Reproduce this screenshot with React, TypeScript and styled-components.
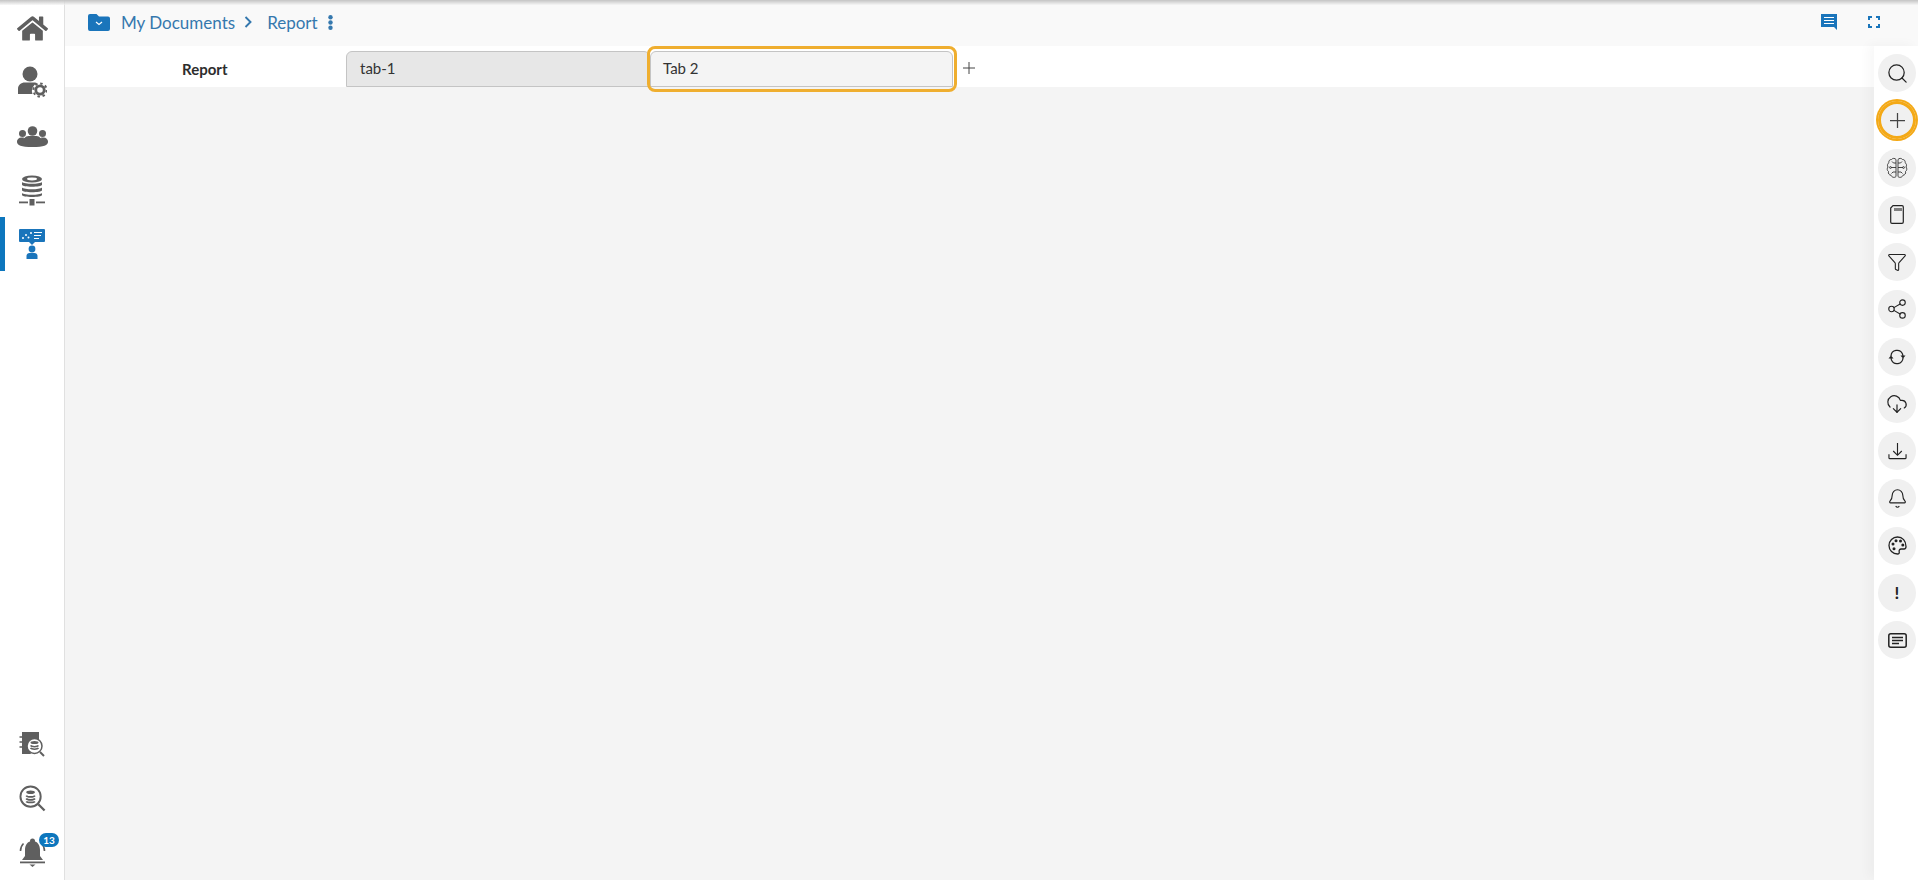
import { ReactNode } from "react";
import styled, { createGlobalStyle } from "styled-components";
import { FaHome } from "react-icons/fa";
import { Search, Filter, Share2, CloudDownload, Bell } from "lucide-react";

const GlobalStyle = createGlobalStyle`
  html, body {
    margin: 0;
    height: 100%;
    background: #f4f4f4;
    font-family: "Lato", "Open Sans", sans-serif;
    overflow: hidden;
  }
  #root {
    height: 100%;
  }
`;

const Page = styled.div`
  display: flex;
  height: 880px;
  position: relative;

  &:before {
    content: "";
    position: absolute;
    z-index: 5;
    top: 0;
    left: 0;
    right: 0;
    height: 5px;
    background: linear-gradient(#c4c4c4, rgba(244, 244, 244, 0.6));
  }
`;

const Sidebar = styled.nav`
  box-sizing: border-box;
  width: 65px;
  flex: none;
  background: #fff;
  border-right: 1px solid #e0e0e0;
  display: flex;
  flex-direction: column;
  justify-content: space-between;
  padding: 1px 0 1px;
`;

const SideGroup = styled.div`
  display: flex;
  flex-direction: column;
`;

const SideItem = styled.div<{ $active?: boolean }>`
  height: 54px;
  display: flex;
  align-items: center;
  justify-content: center;
  color: #5f5f5f;
  position: relative;
  box-sizing: border-box;
  border-left: 5px solid ${({ $active }) => ($active ? "#0d76bd" : "transparent")};
  padding-right: 5px;
`;

const Badge = styled.span`
  position: absolute;
  top: 8px;
  left: 34px;
  width: 20px;
  height: 14px;
  border-radius: 8px;
  background: #0d76bd;
  color: #fff;
  font-size: 10px;
  font-weight: 700;
  line-height: 14px;
  text-align: center;
`;

const Main = styled.div`
  flex: 1;
  min-width: 0;
  display: flex;
  flex-direction: column;
`;

const TopBar = styled.header`
  height: 46px;
  flex: none;
  box-sizing: border-box;
  background: #f9f9f9;
  display: flex;
  align-items: center;
  justify-content: space-between;
  padding: 0 38px 2px 23px;
`;

const Crumbs = styled.div`
  display: flex;
  align-items: center;
  color: #3578ae;
  font-size: 17px;
`;

const CrumbText = styled.span<{ $ml: number }>`
  margin-left: ${({ $ml }) => $ml}px;
`;

const TopActions = styled.div`
  display: flex;
  align-items: center;
  gap: 31px;
  color: #1a75bb;
`;

const Body = styled.div`
  flex: 1;
  display: flex;
  min-height: 0;
`;

const Content = styled.main`
  flex: 1;
  min-width: 0;
  background: #f4f4f4;
`;

const TabRow = styled.div`
  height: 41px;
  background: #fff;
  display: flex;
  align-items: flex-start;
  box-sizing: border-box;
  padding-top: 5px;
`;

const ReportLabel = styled.div`
  width: 281px;
  flex: none;
  box-sizing: border-box;
  padding: 9px 0 0 117px;
  font-size: 15px;
  font-weight: 700;
  color: #2d2d2d;
`;

const Tab = styled.div<{ $selected?: boolean }>`
  box-sizing: border-box;
  width: ${({ $selected }) => ($selected ? 303 : 304)}px;
  height: 36px;
  border: 1px solid #c4c4c4;
  border-radius: 6px 6px 0 0;
  background: ${({ $selected }) => ($selected ? "#f4f4f4" : "#e7e7e7")};
  padding: 0 10px 0 ${({ $selected }) => ($selected ? 12 : 13)}px;
  font-size: 15px;
  line-height: 32px;
  color: #333;
  position: relative;
  flex: none;
`;

const TabHighlight = styled.span`
  position: absolute;
  top: -6px;
  bottom: -6px;
  left: -4px;
  right: -5px;
  border: 3px solid #efae2f;
  border-radius: 8px;
  pointer-events: none;
`;

const AddTab = styled.div`
  margin: 11px 0 0 10px;
  display: flex;
`;

const Rail = styled.aside`
  width: 44px;
  flex: none;
  background: #fff;
  box-shadow: -6px -2px 10px rgba(0, 0, 0, 0.03);
  display: flex;
  flex-direction: column;
  align-items: center;
  padding-top: 8px;
  box-sizing: border-box;
  gap: 9.25px;
`;

const RailButton = styled.div<{ $ring?: boolean }>`
  width: 38px;
  height: 38px;
  flex: none;
  border-radius: 50%;
  background: #f0f0f0;
  display: flex;
  align-items: center;
  justify-content: center;
  color: #222;
  font-size: 17px;
  font-weight: 700;
  position: relative;
  left: 1px;
  ${({ $ring }) =>
    $ring && `box-shadow: 0 0 0 2px #f4a916, inset 0 0 0 3px #f4a916;`}
`;

const UserGearIcon = () => (
  <svg width="30" height="32" viewBox="0 0 30 32" fill="#5f5f5f">
    <circle cx="13" cy="8" r="7.500" />
    <path d="M1 28v-5c0-4 3-6.500 7-6.500h9c1.500 0 2.500.3 3.500.8A8 8 0 0 0 15.500 28z" />
    <circle cx="23" cy="24" r="4.200" fill="none" stroke="#5f5f5f" strokeWidth="2.800" />
    <circle cx="23" cy="24" r="6.600" fill="none" stroke="#5f5f5f" strokeWidth="2" strokeDasharray="2.500 2.680" />
  </svg>
);

const UsersIcon = () => (
  <svg width="31" height="21" viewBox="0 0 31 21" fill="#5f5f5f">
    <circle cx="15.500" cy="5" r="4.800" />
    <circle cx="5.500" cy="7.500" r="3.500" />
    <circle cx="25.500" cy="7.500" r="3.500" />
    <path d="M0 16c0-3 2-4.500 4.500-4.500H7c-.5 1-.8 2-.8 3.500zM31 16c0-3-2-4.500-4.500-4.500H24c.5 1 .8 2 .8 3.500z" />
    <path d="M7.500 12c1-1.200 2.500-2 4-2h8c1.500 0 3 .8 4 2 3 .8 7.500 1.500 7.500 4 0 3-4 5-15.500 5S0 19 0 16c0-2.500 4.500-3.200 7.500-4z" />
  </svg>
);

const DbStack = () => (
  <svg width="26" height="31" viewBox="0 0 26 31" fill="#5f5f5f">
    <ellipse cx="13" cy="4" rx="10" ry="3.600" />
    <ellipse cx="13" cy="4" rx="5" ry="1.400" fill="#fff" />
    <path d="M3 7c2 2.400 18 2.400 20 0v2.800c0 2.600-20 2.600-20 0zM3 12.500c2 2.400 18 2.400 20 0v2.800c0 2.600-20 2.600-20 0zM3 18c2 2.400 18 2.400 20 0v2c0 2.600-20 2.600-20 0z" />
    <rect x="10.500" y="24" width="5" height="6.500" />
    <rect x="0" y="26.500" width="9" height="1.800" />
    <rect x="17" y="26.500" width="9" height="1.800" />
  </svg>
);

const PresenterIcon = () => (
  <svg width="26" height="30" viewBox="0 0 26 30">
    <rect x="0" y="0" width="26" height="13" rx="1" fill="#1a75bb" />
    <path d="M10 13h6l-3 3z" fill="#1a75bb" />
    <g fill="#fff">
      <circle cx="4" cy="9" r="1" />
      <circle cx="7" cy="6" r="1" />
      <circle cx="9.500" cy="8.500" r="1" />
      <circle cx="12" cy="4" r="1" />
    </g>
    <path d="M15 3.500h8M15 6.500h7M15 9.500h5" stroke="#fff" strokeWidth="1.200" />
    <circle cx="13" cy="20" r="3.400" fill="#1a75bb" />
    <path d="M7.500 30v-3c0-2 1.500-3 3-3h5c1.500 0 3 1 3 3v3z" fill="#1a75bb" />
  </svg>
);

const BookSearchIcon = () => (
  <svg width="26" height="27" viewBox="0 0 26 27" fill="none">
    <path d="M3 1h17v9a9 9 0 0 0-8 13H3z" fill="#5f5f5f" />
    <path d="M0.500 6h4M0.500 11h4M0.500 16h4" stroke="#5f5f5f" strokeWidth="1.500" />
    <circle cx="15.500" cy="15" r="7.500" fill="#fff" stroke="#5f5f5f" strokeWidth="1.500" />
    <ellipse cx="15.500" cy="11.500" rx="4" ry="1.500" fill="#5f5f5f" />
    <path d="M11.500 14.500c1 1.500 7 1.500 8 0M11.500 17c1 1.500 7 1.500 8 0" stroke="#5f5f5f" strokeWidth="1.500" />
    <path d="M21 21l4 4" stroke="#5f5f5f" strokeWidth="2" />
  </svg>
);

const DbSearchIcon = () => (
  <svg width="27" height="27" viewBox="0 0 28 28" fill="none">
    <circle cx="12" cy="12" r="10.500" stroke="#5f5f5f" strokeWidth="2" />
    <ellipse cx="12" cy="7.500" rx="4.500" ry="1.800" fill="#5f5f5f" />
    <path d="M7.500 11c1 1.800 8 1.800 9 0M7.500 14c1 1.800 8 1.800 9 0M7.500 17c1 1.400 8 1.400 9 0" stroke="#5f5f5f" strokeWidth="1.800" />
    <path d="M20 20l6.500 6.500" stroke="#5f5f5f" strokeWidth="2.400" />
  </svg>
);

const RingingBell = () => (
  <svg width="27" height="29" viewBox="0 0 27 29" fill="#5f5f5f">
    <circle cx="13.500" cy="3" r="2.500" />
    <path d="M13.500 3c5 0 7.500 4 7.500 9v6l3 4H3l3-4v-6c0-5 2.500-9 7.500-9z" />
    <path d="M1 23.500h25v1.800H1z" />
    <path d="M10.500 26.500h6l-3 2.500z" />
    <path d="M1.500 13c0-3 1-5.500 3-7.500M25.500 13c0-3-1-5.500-3-7.500" fill="none" stroke="#5f5f5f" strokeWidth="1.600" />
  </svg>
);

const FolderIcon = () => (
  <svg width="22" height="17" viewBox="0 0 22 17">
    <path d="M0 2a2 2 0 0 1 2-2h6.500L11 2.500h9a2 2 0 0 1 2 2V15a2 2 0 0 1-2 2H2a2 2 0 0 1-2-2z" fill="#1a75bb" />
    <path d="M8 8l3 2.500L14 8" stroke="#fff" strokeWidth="1.200" fill="none" />
  </svg>
);

const Chevron = () => (
  <svg width="8" height="12" viewBox="0 0 8 12" style={{ marginLeft: 9 }}>
    <path d="M1.500 1l5 5-5 5" stroke="#3578ae" strokeWidth="1.900" fill="none" />
  </svg>
);

const Kebab = () => (
  <svg width="5" height="15" viewBox="0 0 5 15" style={{ marginLeft: 10 }} fill="#3578ae">
    <circle cx="2.500" cy="2.200" r="2.200" />
    <circle cx="2.500" cy="7.500" r="2.200" />
    <circle cx="2.500" cy="12.800" r="2.200" />
  </svg>
);

const ChatIcon = () => (
  <svg width="16" height="16" viewBox="0 0 16 16">
    <path d="M0 0h16v16l-3-3H0z" fill="#1a75bb" />
    <path d="M3 3.500h10M3 6.500h10M3 9.500h10" stroke="#fff" strokeWidth="1.200" />
  </svg>
);

const ExpandIcon = () => (
  <svg width="12" height="12" viewBox="0 0 12 12" fill="none" stroke="#1a75bb" strokeWidth="2">
    <path d="M1 4V1h3M8 1h3v3M11 8v3H8M4 11H1V8" />
  </svg>
);

const PlusThin = ({ size }: { size: number }) => (
  <svg width={size} height={size} viewBox="0 0 12 12" stroke="#444" strokeWidth="1">
    <path d="M6 0v12M0 6h12" />
  </svg>
);

const BrainIcon = () => (
  <svg width="22" height="22" viewBox="0 0 22 22" fill="none" stroke="#333" strokeWidth="0.900">
    <path d="M10 2.500C9 1 6.500 1 5.500 2.500 3.500 2.500 2.500 4 3 5.500 1.500 6.500 1 8.500 2 10 .8 11.500 1 13.500 2.500 14.500c-.5 2 .5 3.500 2.500 3.700.5 2 3.500 3 5 1.300z" />
    <path d="M12 2.500c1-1.500 3.500-1.500 4.500 0 2 0 3 1.500 2.500 3 1.500 1 2 3 1 4.500 1.200 1.500 1 3.500-.5 4.500.5 2-.5 3.500-2.500 3.700-.5 2-3.500 3-5 1.300z" />
    <path d="M10 6H7.500L6 4.500M10 10.500H5M10 15H7l-1.500 1.500M12 6h2.500L16 4.500M12 10.500h5M12 15h3l1.500 1.500" />
    <circle cx="4.500" cy="10.500" r="0.900" />
    <circle cx="17.500" cy="10.500" r="0.900" />
  </svg>
);

const SdCardIcon = () => (
  <svg width="14" height="19" viewBox="0 0 14 19" fill="none" stroke="#222" strokeWidth="1.200">
    <path d="M3 .7h9a1.300 1.300 0 0 1 1.300 1.300v15a1.300 1.300 0 0 1-1.300 1.300H2A1.300 1.300 0 0 1 .7 17V3z" />
    <path d="M5 3v3M7 3v3M9 3v3M11 3v3" strokeWidth="1.100" />
  </svg>
);

const SyncIcon = () => (
  <svg width="18" height="16" viewBox="0 0 18 16" fill="none" stroke="#222" strokeWidth="1.200">
    <path d="M3 7a6 6 0 0 1 11.500-2L15 7" />
    <path d="M15 9a6 6 0 0 1-11.500 2L3 9" />
    <path d="M12.500 6.500h5L15 9.500zM.5 9.500h5L3 6.500z" fill="#222" stroke="none" />
  </svg>
);

const TrayDownloadIcon = () => (
  <svg width="19" height="19" viewBox="0 0 20 20" fill="none" stroke="#222" strokeWidth="1.200">
    <path d="M10 1v13M5.500 9.500l4.500 4.500 4.500-4.500" />
    <path d="M1 13v3.500a1 1 0 0 0 1 1h16a1 1 0 0 0 1-1V13" />
  </svg>
);

const PaletteIcon = () => (
  <svg width="19" height="19" viewBox="0 0 19 19" fill="none" stroke="#222" strokeWidth="1.300">
    <path d="M9.500 1C4.800 1 1 4.800 1 9.500S4.800 18 9.500 18c1.500 0 2-1 1.700-2.200-.4-1.500.4-2.800 2-2.800H16c1.300 0 2-1 2-2.500C18 5 14.500 1 9.500 1z" />
    <g fill="#222" stroke="none">
      <circle cx="5" cy="8" r="1.500" />
      <circle cx="8" cy="4.700" r="1.500" />
      <circle cx="12.500" cy="5" r="1.500" />
      <circle cx="14.800" cy="9" r="1.500" />
      <circle cx="6" cy="12.800" r="1.500" />
    </g>
  </svg>
);

const NoteIcon = () => (
  <svg width="19" height="15" viewBox="0 0 19 15" fill="none" stroke="#222">
    <rect x="0.800" y="0.800" width="17.400" height="13.400" rx="2" strokeWidth="1.500" />
    <path d="M4 4.500h11M4 7.500h11M4 10.500h7" strokeWidth="1.500" />
  </svg>
);

interface RailEntry {
  key: string;
  icon: ReactNode;
  ring?: boolean;
}

const railEntries: RailEntry[] = [
  { key: "search", icon: <Search size={23} strokeWidth={1.300} /> },
  { key: "add", icon: <PlusThin size={15} />, ring: true },
  { key: "brain", icon: <BrainIcon /> },
  { key: "card", icon: <SdCardIcon /> },
  { key: "filter", icon: <Filter size={20} strokeWidth={1.300} /> },
  { key: "share", icon: <Share2 size={22} strokeWidth={1.200} /> },
  { key: "sync", icon: <SyncIcon /> },
  { key: "cloud", icon: <CloudDownload size={22} strokeWidth={1.300} /> },
  { key: "download", icon: <TrayDownloadIcon /> },
  { key: "bell", icon: <Bell size={21} strokeWidth={1.300} /> },
  { key: "palette", icon: <PaletteIcon /> },
  { key: "alert", icon: "!" },
  { key: "note", icon: <NoteIcon /> },
];

const App = () => (
  <>
    <GlobalStyle />
    <Page>
      <Sidebar>
        <SideGroup>
          <SideItem>
            <FaHome size={31} />
          </SideItem>
          <SideItem>
            <UserGearIcon />
          </SideItem>
          <SideItem>
            <UsersIcon />
          </SideItem>
          <SideItem>
            <DbStack />
          </SideItem>
          <SideItem $active>
            <PresenterIcon />
          </SideItem>
        </SideGroup>
        <SideGroup>
          <SideItem>
            <BookSearchIcon />
          </SideItem>
          <SideItem>
            <DbSearchIcon />
          </SideItem>
          <SideItem>
            <RingingBell />
            <Badge>13</Badge>
          </SideItem>
        </SideGroup>
      </Sidebar>
      <Main>
        <TopBar>
          <Crumbs>
            <FolderIcon />
            <CrumbText $ml={11}>My Documents</CrumbText>
            <Chevron />
            <CrumbText $ml={15}>Report</CrumbText>
            <Kebab />
          </Crumbs>
          <TopActions>
            <ChatIcon />
            <ExpandIcon />
          </TopActions>
        </TopBar>
        <Body>
          <Content>
            <TabRow>
              <ReportLabel>Report</ReportLabel>
              <Tab>tab-1</Tab>
              <Tab $selected>
                Tab 2
                <TabHighlight />
              </Tab>
              <AddTab>
                <PlusThin size={12} />
              </AddTab>
            </TabRow>
          </Content>
          <Rail>
            {railEntries.map(({ key, icon, ring }) => (
              <RailButton key={key} $ring={ring}>
                {icon}
              </RailButton>
            ))}
          </Rail>
        </Body>
      </Main>
    </Page>
  </>
);

export default App;
